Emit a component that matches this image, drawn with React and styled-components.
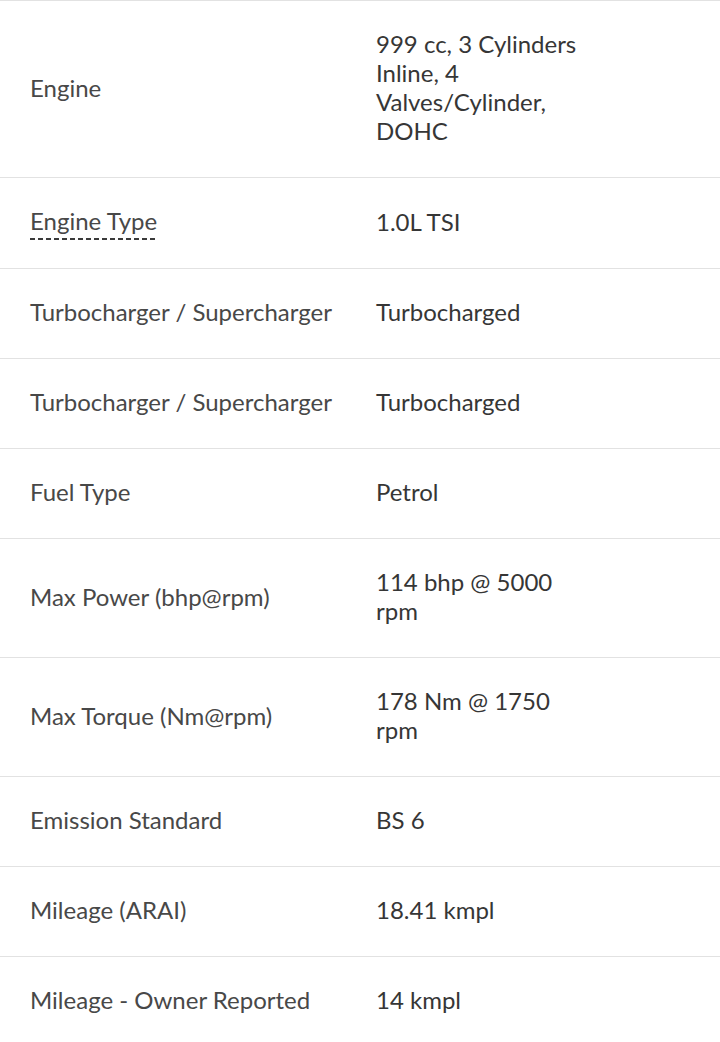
import React from 'react';
import styled, { createGlobalStyle } from 'styled-components';

const GlobalStyle = createGlobalStyle`
  body {
    margin: 0;
    background: #fff;
    font-family: Lato, "Open Sans", sans-serif;
  }
`;

const SpecList = styled.div`
  border-top: 1px solid #e2e2e2;
`;

const SpecRow = styled.div`
  display: grid;
  grid-template-columns: 346px 1fr;
  align-items: center;
  padding: 28px 0 32px;
  border-bottom: 1px solid #e2e2e2;
  font-size: 24px;
  line-height: 29px;
`;

const Label = styled.div`
  padding-left: 30px;
  color: #484848;
`;

const Hint = styled.span`
  display: inline-block;
  line-height: 27px;
  margin-bottom: -4px;
  padding-bottom: 6px;
  background-image: repeating-linear-gradient(
    to right,
    #3a3a3a 0,
    #3a3a3a 5px,
    transparent 5px,
    transparent 8px
  );
  background-size: 100% 2px;
  background-repeat: no-repeat;
  background-position: left bottom;
`;

const Value = styled.div`
  padding-left: 30px;
  max-width: 215px;
  color: #363636;
`;

const specs = [
  { label: 'Engine', value: '999 cc, 3 Cylinders Inline, 4 Valves/Cylinder, DOHC' },
  { label: 'Engine Type', value: '1.0L TSI', hint: true },
  { label: 'Turbocharger / Supercharger', value: 'Turbocharged' },
  { label: 'Turbocharger / Supercharger', value: 'Turbocharged' },
  { label: 'Fuel Type', value: 'Petrol' },
  { label: 'Max Power (bhp@rpm)', value: '114 bhp @ 5000 rpm' },
  { label: 'Max Torque (Nm@rpm)', value: '178 Nm @ 1750 rpm' },
  { label: 'Emission Standard', value: 'BS 6' },
  { label: 'Mileage (ARAI)', value: '18.41 kmpl' },
  { label: 'Mileage - Owner Reported', value: '14 kmpl' },
];

const App = () => (
  <>
    <GlobalStyle />
    <SpecList>
      {specs.map((spec, i) => (
        <SpecRow key={i}>
          <Label>{spec.hint ? <Hint>{spec.label}</Hint> : spec.label}</Label>
          <Value>{spec.value}</Value>
        </SpecRow>
      ))}
    </SpecList>
  </>
);

export default App;
